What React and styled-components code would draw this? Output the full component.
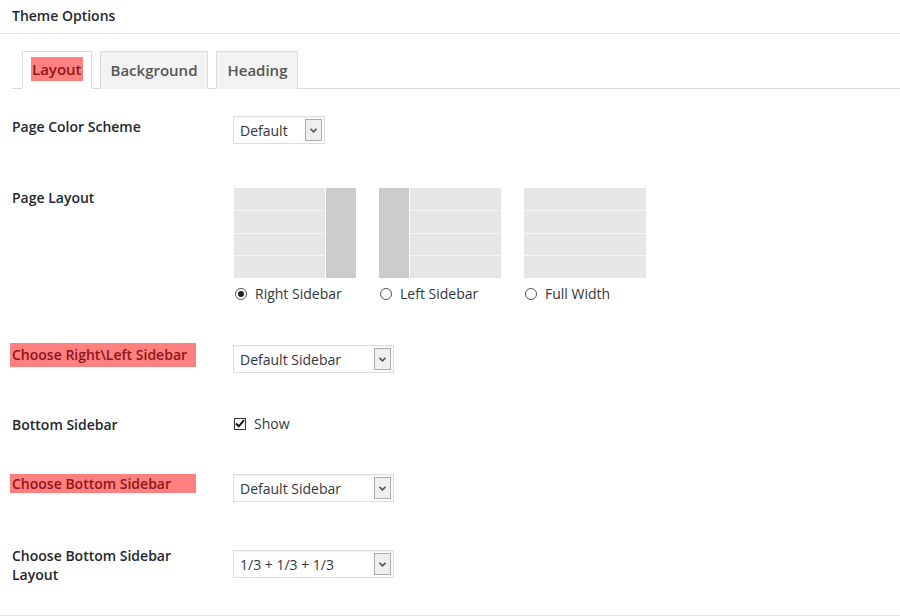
import React from "react";
import styled, { createGlobalStyle } from "styled-components";

const Global = createGlobalStyle`
  html, body { margin: 0; padding: 0; background: #fff; }
  body { font-family: "Open Sans", "Noto Sans", sans-serif; color: #23282d; }
  * { box-sizing: border-box; }
`;

const Page = styled.div`
  width: 900px;
  height: 616px;
  background: #fff;
  overflow: hidden;
  display: flex;
  flex-direction: column;
`;

const Header = styled.div`
  height: 34px;
  padding: 6px 12px 0;
  border-bottom: 1px solid #e8e8e8;
  font-size: 14px;
  line-height: 19px;
  font-weight: 600;
`;

const TabBar = styled.div`
  margin: 17px 0 0 12px;
  padding-left: 10px;
  display: flex;
  gap: 8px;
  border-bottom: 1px solid #d9d9d9;
  height: 38px;
`;

const Tab = styled.div`
  height: 38px;
  padding: 0 10px 2px;
  border: 1px solid #dcdcdc;
  border-bottom: ${(p) => (p.$active ? "1px solid #fff" : "none")};
  background: ${(p) => (p.$active ? "#fff" : "#f3f3f3")};
  display: flex;
  align-items: center;
  font-size: 15px;
  font-weight: 600;
  color: #555;
`;

const Mark = styled.span`
  background: #ff8080;
  color: #8f1518;
  padding: 2px 1px;
  margin: 0 -2px;
`;

const Content = styled.div`
  padding-left: 12px;
  display: flex;
  flex-direction: column;
  flex: 1;
`;

const Row = styled.div`
  display: grid;
  grid-template-columns: 221px 1fr;
  align-items: start;
  margin-top: ${(p) => p.$top}px;
`;

const Label = styled.div`
  font-size: 14px;
  line-height: 19px;
  font-weight: 600;
  color: #23282d;
  padding-top: ${(p) => p.$pad || 0}px;
  width: 190px;
`;

const HiLabel = styled(Label)`
  background: #ff8080;
  color: #8f1518;
  width: 186px;
  margin-left: -2px;
  padding-left: 2px;
  padding-top: ${(p) => p.$pad || 0}px;
  height: ${(p) => p.$h}px;
`;

const Control = styled.div`
  margin-top: ${(p) => p.$top || 0}px;
`;

const Select = styled.div`
  width: ${(p) => p.$w}px;
  height: 28px;
  border: 1px solid #ddd;
  box-shadow: inset 0 1px 2px rgba(0, 0, 0, 0.05);
  background: #fff;
  display: flex;
  align-items: center;
  justify-content: space-between;
  padding: 0 2px 0 6px;
  font-size: 14px;
  color: #32373c;
`;

const ArrowBox = styled.span`
  width: 17px;
  height: 22px;
  border: 1px solid #acacac;
  background: #efefef;
  display: flex;
  align-items: center;
  justify-content: center;
`;

const Arrow = () => (
  <ArrowBox>
    <svg width="7" height="5" viewBox="0 0 7 5">
      <path d="M0.5 0.8 L3.5 3.8 L6.5 0.8" fill="none" stroke="#555" strokeWidth="1.6" />
    </svg>
  </ArrowBox>
);

const Layouts = styled.div`
  display: flex;
  gap: 23px;
  padding-left: 1px;
`;

const LayoutOption = styled.div`
  display: flex;
  flex-direction: column;
  gap: 6px;
`;

const Thumb = styled.div`
  width: 122px;
  height: 90px;
  display: flex;
  flex-direction: ${(p) => (p.$side === "left" ? "row-reverse" : "row")};
  gap: 1px;
  background: #fff;
`;

const ThumbMain = styled.div`
  flex: 1;
  display: flex;
  flex-direction: column;
  gap: 1px;
  background: #f4f4f4;
`;

const ThumbStripe = styled.div`
  flex: 1;
  background: #e6e6e6;
`;

const ThumbSide = styled.div`
  width: 30px;
  background: #cbcbcb;
`;

const ChoiceLabel = styled.label`
  display: flex;
  align-items: center;
  gap: 8px;
  font-size: 14px;
  line-height: 19px;
  color: #32373c;
  padding-left: 1px;
`;

const Radio = styled.span`
  width: 12px;
  height: 12px;
  border-radius: 50%;
  border: 1px solid #555;
  display: flex;
  align-items: center;
  justify-content: center;
  &::after {
    content: "";
    width: 6px;
    height: 6px;
    border-radius: 50%;
    background: ${(p) => (p.$checked ? "#222" : "transparent")};
  }
`;

const Check = styled.span`
  width: 12px;
  height: 12px;
  border: 1px solid #333;
  display: flex;
  align-items: center;
  justify-content: center;
`;

const Footer = styled.div`
  margin-top: auto;
  border-bottom: 1px solid #e3e3e3;
  margin-left: -12px;
`;

const layouts = [
  { side: "right", label: "Right Sidebar", checked: true },
  { side: "left", label: "Left Sidebar" },
  { side: "none", label: "Full Width" },
];

export default function App() {
  return (
    <Page>
      <Global />
      <Header>Theme Options</Header>
      <TabBar>
        <Tab $active>
          <Mark>Layout</Mark>
        </Tab>
        <Tab>Background</Tab>
        <Tab>Heading</Tab>
      </TabBar>
      <Content>
        <Row $top={27}>
          <Label $pad={1}>Page Color Scheme</Label>
          <Control>
            <Select $w={92}>
              Default
              <Arrow />
            </Select>
          </Control>
        </Row>
        <Row $top={44}>
          <Label>Page Layout</Label>
          <Control>
            <Layouts>
              {layouts.map((l) => (
                <LayoutOption key={l.label}>
                  <Thumb $side={l.side}>
                    <ThumbMain>
                      <ThumbStripe />
                      <ThumbStripe />
                      <ThumbStripe />
                      <ThumbStripe />
                    </ThumbMain>
                    {l.side !== "none" && <ThumbSide />}
                  </Thumb>
                  <ChoiceLabel>
                    <Radio $checked={l.checked} />
                    {l.label}
                  </ChoiceLabel>
                </LayoutOption>
              ))}
            </Layouts>
          </Control>
        </Row>
        <Row $top={40}>
          <HiLabel $pad={2} $h={24}>Choose Right\Left Sidebar</HiLabel>
          <Control $top={2}>
            <Select $w={161}>
              Default Sidebar
              <Arrow />
            </Select>
          </Control>
        </Row>
        <Row $top={41}>
          <Label $pad={1}>Bottom Sidebar</Label>
          <Control>
            <ChoiceLabel>
              <Check>
                <svg width="10" height="9" viewBox="0 0 10 9">
                  <path d="M1 4.5 L3.8 7.3 L9 1.2" fill="none" stroke="#111" strokeWidth="2" />
                </svg>
              </Check>
              Show
            </ChoiceLabel>
          </Control>
        </Row>
        <Row $top={40}>
          <HiLabel $pad={0} $h={19}>Choose Bottom Sidebar</HiLabel>
          <Control $top={0}>
            <Select $w={161}>
              Default Sidebar
              <Arrow />
            </Select>
          </Control>
        </Row>
        <Row $top={43}>
          <Label $pad={1}>Choose Bottom Sidebar Layout</Label>
          <Control $top={5}>
            <Select $w={161}>
              1/3 + 1/3 + 1/3
              <Arrow />
            </Select>
          </Control>
        </Row>
        <Footer />
      </Content>
    </Page>
  );
}
